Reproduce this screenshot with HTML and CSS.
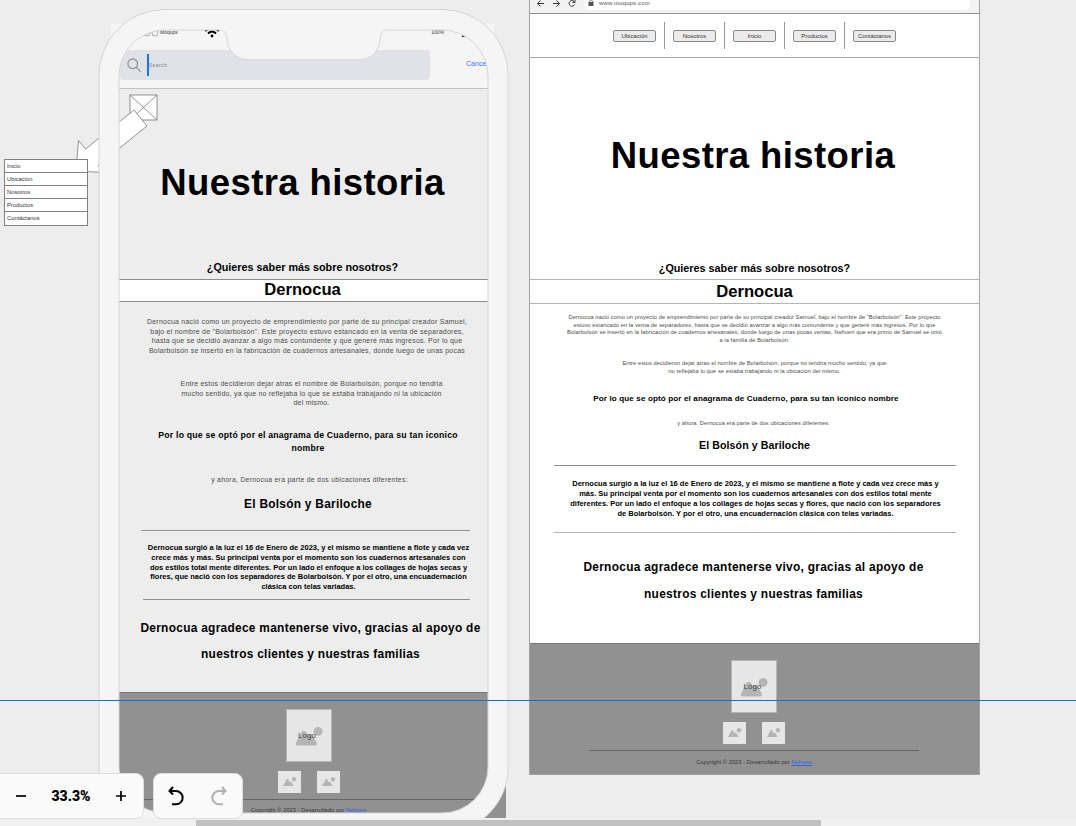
FILE: index.html
```
<!DOCTYPE html>
<html lang="es">
<head>
<meta charset="utf-8">
<title>Dernocua</title>
<link rel="stylesheet" href="styles.css">
</head>
<body>
<main class="canvas">
  <section class="phone">
    <header class="ios">
      <div class="status"><svg class="dots" viewBox="0 0 16 8"><circle cx="3" cy="4" r="3"/><circle cx="11" cy="4" r="3"/></svg><span class="carrier">Moqups</span>
        <svg class="wifi" viewBox="0 0 14 10"><path d="M0 3Q7-3 14 3M3 5.500Q7 1.500 11 5.500" /><circle cx="7" cy="8" r="1.400"/></svg>
        <span class="charge">100%</span><i class="battery"></i></div>
      <div class="search-row">
        <div class="search"><svg class="lens" viewBox="0 0 16 16"><circle cx="6.500" cy="6.500" r="5.500"/><path d="M10.500 10.500L15.500 15.500"/></svg><i class="caret"></i><span>Search</span></div>
        <a class="cancel">Cancel</a>
      </div>
    </header>
    <h1 class="title">Nuestra historia</h1>
    <h3 class="ask">¿Quieres saber más sobre nosotros?</h3>
    <h2 class="band">Dernocua</h2>
    <p class="text intro">Dernocua nació como un proyecto de emprendimiento por parte de su principal creador Samuel,<br>bajo el nombre de "Bolarbolsón". Este proyecto estuvo estancado en la venta de separadores,<br>hasta que se decidió avanzar a algo más contundente y que generé más ingresos. Por lo que<br>Bolarbolsón se insertó en la fabricación de cuadernos artesanales, donde luego de unas pocas</p>
    <p class="text second">Entre estos decidieron dejar atras el nombre de Bolarbolsón, porque no tendria<br>mucho sentido, ya que no reflejaba lo que se estaba trabajando ni la ubicación<br>del mismo.</p>
    <p class="anagram">Por lo que se optó por el anagrama de Cuaderno, para su tan iconico<br>nombre</p>
    <p class="text now">y ahora, Dernocua era parte de dos ubicaciones diferentes:</p>
    <p class="place">El Bolsón y Bariloche</p>
    <hr class="rule rule-a">
    <p class="story">Dernocua surgió a la luz el 16 de Enero de 2023, y el mismo se mantiene a flote y cada vez<br>crece más y más. Su principal venta por el momento son los cuadernos artesanales con<br>dos estilos total mente diferentes. Por un lado el enfoque a los collages de hojas secas y<br>flores, que nació con los separadores de Bolarbolsón. Y por el otro, una encuadernación<br>clásica con telas variadas.</p>
    <hr class="rule rule-b">
    <p class="thanks">Dernocua agradece mantenerse vivo, gracias al apoyo de<br>nuestros clientes y nuestras familias</p>
    <footer class="foot">
      <div class="logo"><svg viewBox="0 0 46 52"><circle cx="32.500" cy="21.300" r="4.700"/><path d="M11 36Q8.500 36 9.500 33L14.500 23Q17.500 18.500 20.500 23L22 25Q25 22.500 27 26L31 33Q32 36 30 36Z"/></svg><span>Logo</span></div>
      <div class="pics"><svg viewBox="0 0 23 22"><circle cx="16" cy="8.300" r="2.200"/><path d="M5 15L8.500 8.500Q9.500 7.500 10.500 9L11.500 11Q13 10 14 12L15.500 15Z"/></svg><svg viewBox="0 0 23 22"><circle cx="16" cy="8.300" r="2.200"/><path d="M5 15L8.500 8.500Q9.500 7.500 10.500 9L11.500 11Q13 10 14 12L15.500 15Z"/></svg></div>
      <hr class="foot-rule">
      <p class="copy">Copyright © 2023 - Desarrollado por <a>Nehuen</a></p>
    </footer>
  </section>

  <svg class="device" viewBox="0 0 520 818">
    <rect class="stub" x="130" y="95" width="27" height="25"/><path class="stub" d="M130 95L157 120M157 95L130 120"/>
    <path class="arrow" d="M78.500 140.500L85.500 149L134 110L147 126L98 165.500L104 172.500L76 171Z"/>
    <path class="bezel" fill-rule="evenodd" d="M165 9.500H442A66 66 0 0 1 508.200 75V767A66 66 0 0 1 442 833H165A66 66 0 0 1 99 767V75A66 66 0 0 1 165 9.500ZM165 30H220Q226.500 30 226.500 38Q228 58 248 60H360Q379 58 380.500 38Q380.500 30 386 30H442A46 46 0 0 1 488 76V767A46 46 0 0 1 442 813H165A46 46 0 0 1 119 767V76A46 46 0 0 1 165 30Z"/>
  </svg>

  <ul class="menu"><li>Inicio</li><li>Ubicación</li><li>Nosotros</li><li>Productos</li><li>Contáctanos</li></ul>

  <section class="desktop">
    <div class="browser"><svg viewBox="0 0 50 12"><path d="M8 3.500H1.500M4.500 .5L1.500 3.500L4.500 6.500M17 3.500H23.500M20.500 .5L23.500 3.500L20.500 6.500M38 1.500A2.800 2.800 0 1 0 38.500 4.500M39 0V2.500H36.500"/></svg><div class="address"><svg viewBox="0 0 6 8"><path d="M.5 3H5.500V7H.5Z"/><path class="shackle" d="M1.500 3V2Q3-.5 4.500 2V3"/></svg><span>www.moqups.com</span></div></div>
    <nav class="nav"><a>Ubicación</a><i></i><a>Nosotros</a><i></i><a>Inicio</a><i></i><a>Productos</a><i></i><a>Contáctanos</a></nav>
    <h1 class="title">Nuestra historia</h1>
    <h3 class="ask">¿Quieres saber más sobre nosotros?</h3>
    <h2 class="band">Dernocua</h2>
    <p class="text intro">Dernocua nació como un proyecto de emprendimiento por parte de su principal creador Samuel, bajo el nombre de "Bolarbolsón". Este proyecto<br>estuvo estancado en la venta de separadores, hasta que se decidió avanzar a algo más contundente y que generé más ingresos. Por lo que<br>Bolarbolsón se insertó en la fabricación de cuadernos artesanales, donde luego de unas pocas ventas, Nehuen que era primo de Samuel se unió<br>a la familia de Bolarbolsón.</p>
    <p class="text second">Entre estos decidieron dejar atras el nombre de Bolarbolsón, porque no tendria mucho sentido, ya que<br>no reflejaba lo que se estaba trabajando ni la ubicación del mismo.</p>
    <p class="anagram">Por lo que se optó por el anagrama de Cuaderno, para su tan iconico nombre</p>
    <p class="text now">y ahora, Dernocua era parte de dos ubicaciones diferentes:</p>
    <p class="place">El Bolsón y Bariloche</p>
    <hr class="rule rule-a">
    <p class="story">Dernocua surgió a la luz el 16 de Enero de 2023, y el mismo se mantiene a flote y cada vez crece más y<br>más. Su principal venta por el momento son los cuadernos artesanales con dos estilos total mente<br>diferentes. Por un lado el enfoque a los collages de hojas secas y flores, que nació con los separadores<br>de Bolarbolsón. Y por el otro, una encuadernación clásica con telas variadas.</p>
    <hr class="rule rule-b">
    <p class="thanks">Dernocua agradece mantenerse vivo, gracias al apoyo de<br>nuestros clientes y nuestras familias</p>
    <footer class="foot">
      <div class="logo"><svg viewBox="0 0 46 52"><circle cx="32.500" cy="21.300" r="4.700"/><path d="M11 36Q8.500 36 9.500 33L14.500 23Q17.500 18.500 20.500 23L22 25Q25 22.500 27 26L31 33Q32 36 30 36Z"/></svg><span>Logo</span></div>
      <div class="pics"><svg viewBox="0 0 23 22"><circle cx="16" cy="8.300" r="2.200"/><path d="M5 15L8.500 8.500Q9.500 7.500 10.500 9L11.500 11Q13 10 14 12L15.500 15Z"/></svg><svg viewBox="0 0 23 22"><circle cx="16" cy="8.300" r="2.200"/><path d="M5 15L8.500 8.500Q9.500 7.500 10.500 9L11.500 11Q13 10 14 12L15.500 15Z"/></svg></div>
      <hr class="foot-rule">
      <p class="copy">Copyright © 2023 - Desarrollado por <a>Nehuen</a></p>
    </footer>
  </section>
  <div class="guide"></div>
  <div class="zoom-box"><svg viewBox="0 0 12 12"><path d="M1 6H11"/></svg><b>33.3%</b><svg viewBox="0 0 12 12"><path d="M1 6H11M6 1V11"/></svg></div>
  <div class="undo-box"><svg viewBox="0 0 16 20"><path d="M5 1L1.500 5L5 8.500M1.500 5H8A6.500 6.500 0 0 1 8 18.300H4"/></svg><svg class="off" viewBox="0 0 16 20"><path d="M11 1L14.500 5L11 8.500M14.500 5H8A6.500 6.500 0 0 0 8 18.300H12"/></svg></div>
  <div class="scroll"><i></i></div>
</main>
</body>
</html>
```
FILE: styles.css
```
* { box-sizing: border-box; }
body { margin: 0; background: #ededed; font-family: "Liberation Sans", Arial, sans-serif; }
h1, h2, h3, p, ul, hr { margin: 0; padding: 0; border: 0; font-weight: normal; list-style: none; }
.canvas { position: relative; width: 1076px; height: 826px; overflow: hidden; }
svg { display: block; flex: none; }
.phone, .desktop { position: absolute; display: flex; flex-direction: column; text-align: center; white-space: nowrap; }
.phone { left: 119px; top: 24px; width: 387px; height: 794px; }
.phone > * { width: 369px; }
.ios { height: 65px; background: #f5f5f5; border-bottom: 1px solid #c2c2c2; flex: none; box-shadow: -8px 0 #f5f5f5, 6px 0 #f5f5f5; clip-path: inset(0 -6px 0 -8px); }
.status { height: 26px; display: flex; padding: 5px 18px 0 25px; font-size: 5px; line-height: 7px; color: #333; }
.dots { width: 16px; height: 8px; fill: none; stroke: #777; stroke-width: .6; }
.wifi { width: 14px; height: 10px; margin: -1px 0 0 27px; fill: none; stroke: #000; stroke-width: 2; }
.wifi circle { fill: #000; stroke: none; }
.charge { margin-left: auto; }
.battery { width: 8px; height: 3px; margin: 5px 0 0 18px; background: #333; }
.search-row { display: flex; justify-content: space-between; align-items: center; height: 30px; }
.search { width: 310px; height: 30px; margin-left: 1px; border-radius: 4px; background: #e1e2e7; display: flex; align-items: center; padding-left: 7px; color: #8b8b90; font-size: 5.800px; }
.lens { width: 14px; height: 14px; fill: none; stroke: #8b8b90; stroke-width: 1.300; }
.caret { width: 1.500px; height: 22px; background: #1a73e8; margin-left: 6px; }
.cancel { font-size: 7.100px; color: #3b76f6; line-height: 12px; margin-top: -2px; }
.title { font-size: 36.500px; letter-spacing: .4px; line-height: 44px; font-weight: bold; color: #000; }
.ask { font-size: 10.800px; line-height: 14px; font-weight: bold; }
.band { font-size: 16.600px; font-weight: bold; background: #fff; border: solid #8c8c8c; border-width: 1px 0; }
.text { color: #4c4c4c; }
.anagram, .place, .thanks, .story { font-weight: bold; color: #000; }
.thanks { font-size: 11.900px; letter-spacing: .290px; }
.rule { height: 1px; background: #929292; flex: none; }
.phone .title { margin: 72px 0 0 -1px; }
.phone .ask { margin: 55px 0 0 -1px; }
.phone .band { margin-top: 5px; height: 23px; line-height: 19px; padding-right: 2px; }
.phone .intro { margin: 14.800px 0 0 3.500px; font-size: 7px; letter-spacing: .234px; line-height: 9.750px; }
.phone .second { margin: 22.800px 0 0 8px; font-size: 7px; letter-spacing: .216px; line-height: 9.900px; }
.phone .anagram { margin: 21.100px 0 0 4.500px; font-size: 8.700px; letter-spacing: .220px; line-height: 12.300px; }
.phone .now { margin: 21px 0 0 6px; font-size: 6.800px; letter-spacing: .310px; line-height: 10px; }
.phone .place { margin: 10.500px 0 0 4.500px; font-size: 11.900px; letter-spacing: .270px; line-height: 16px; }
.phone .rule-a { margin: 18.500px 0 0 22px; width: 329px; }
.phone .story { margin: 12.200px 0 0 5px; font-size: 7.500px; line-height: 9.750px; }
.phone .rule-b { margin: 7px 0 0 24px; width: 327px; }
.phone .thanks { margin: 15px 0 0 7px; line-height: 26px; }
.phone .foot { width: 387px; margin-top: 25px; height: 126px; padding-right: 8px; }
.foot { flex: none; background: #919191; border-top: 1px solid #777; display: flex; flex-direction: column; align-items: center; }
.logo { display: grid; width: 46px; height: 53px; margin-top: 16px; background: #e6e6e6; border: 1px solid #b5b5b5; font-size: 7.800px; letter-spacing: .2px; color: #444; place-items: center; }
.logo > * { grid-area: 1 / 1; }
.logo span { margin-right: 3px; }
.logo svg, .pics svg { fill: #b5b5b5; }
.pics { display: flex; gap: 16px; margin-top: 9px; }
.pics svg { width: 23px; height: 22px; background: #e6e6e6; }
.foot-rule { width: 330px; height: 1px; background: #666; margin-top: 6px; }
.copy { font-size: 5.700px; letter-spacing: .060px; line-height: 8px; margin-top: 7px; color: #333; }
.phone .copy { margin-top: 6px; }
.copy a { color: #2b62e8; text-decoration: underline; }
.device { position: absolute; left: 0; top: 0; width: 520px; height: 818px; }
.bezel { fill: #f5f5f5; stroke: #d5d5d5; }
.stub, .arrow { fill: #fff; stroke: #777; stroke-width: .8; }
.menu { position: absolute; left: 4px; top: 158.500px; width: 84px; border: 1px solid #808080; background: #fff; font-size: 5.800px; color: #333; }
.menu li { height: 13.200px; line-height: 13px; padding-left: 2px; border-bottom: 1px solid #808080; }
.menu li:last-child { border: 0; }
.desktop { left: 529px; top: 0; width: 451px; height: 775px; background: #fff; border: solid #a2a2a2; border-width: 0 1px 1px; }
.browser { height: 14px; flex: none; background: #f2f2f2; border-bottom: 1px solid #929292; display: flex; }
.browser > svg { width: 50px; height: 12px; margin-left: 6px; fill: none; stroke: #333; }
.address { display: flex; width: 386px; height: 10px; margin-left: -2px; border-radius: 0 0 5px 5px; background: #fff; font-size: 6px; letter-spacing: .160px; line-height: 7px; color: #555; }
.address svg { width: 6px; height: 8px; margin: -1px 5px 0 4px; fill: #555; }
.address .shackle { fill: none; stroke: #555; stroke-width: .8; }
.nav { height: 44px; flex: none; border-bottom: 1px solid #a5a5a5; display: flex; justify-content: center; align-items: center; gap: 8px; font-size: 5.900px; color: #333; }
.nav a { width: 43px; height: 12px; line-height: 10px; border: 1px solid #888; border-radius: 2px; background: #ebebeb; }
.nav i { width: 1px; height: 27px; background: #999; }
.desktop .title { margin: 75.500px 0 0 -3px; }
.desktop .ask { margin: 83.500px 0 0; }
.desktop .band { margin-top: 4px; height: 25px; line-height: 23px; border-color: #b5b5b5; }
.desktop .intro { margin-top: 9.800px; font-size: 5.700px; letter-spacing: .062px; line-height: 7.800px; }
.desktop .second { margin-top: 14.200px; font-size: 5.700px; letter-spacing: .062px; line-height: 8px; }
.desktop .anagram { margin: 18.800px 0 0 -17px; font-size: 8.100px; letter-spacing: .110px; line-height: 10px; }
.desktop .now { margin: 15px 0 0 -2px; font-size: 5.700px; letter-spacing: .050px; line-height: 8px; }
.desktop .place { margin-top: 11px; font-size: 10.600px; letter-spacing: .1px; line-height: 14px; }
.desktop .rule { margin: 13px 0 0 24px; width: 402px; }
.desktop .story { margin-top: 13.200px; font-size: 7.500px; line-height: 9.950px; padding-left: 2px; }
.desktop .rule-b { background: #b3b3b3; }
.desktop .thanks { margin-top: 21.500px; line-height: 27px; padding-right: 2px; }
.desktop .foot { margin-top: 34.500px; height: 131px; padding-right: 1px; }
.guide { position: absolute; left: 0; top: 700px; width: 1076px; height: 1px; background: #0f6fdc; }
.zoom-box, .undo-box { position: absolute; top: 773px; height: 46px; background: #fafafa; border: 1px solid #dedede; border-radius: 8px; display: flex; align-items: center; justify-content: space-between; z-index: 1; }
.zoom-box { left: -8px; width: 152px; padding: 0 16px 0 22px; font: bold 14px Roboto, sans-serif; }
.zoom-box svg { width: 12px; height: 12px; stroke: #000; stroke-width: 1.700; }
.undo-box { left: 153px; width: 90px; padding: 0 15px 0 14px; }
.undo-box svg { width: 16px; height: 20px; fill: none; stroke: #000; stroke-width: 2; }
.undo-box .off { stroke: #b0b0b0; }
.scroll { position: absolute; left: 0; top: 818px; width: 1076px; height: 8px; padding: 2px 0 0 196px; background: #f0f0f0; }
.scroll i { display: block; width: 625px; height: 6px; background: #c1c1c1; }
```
